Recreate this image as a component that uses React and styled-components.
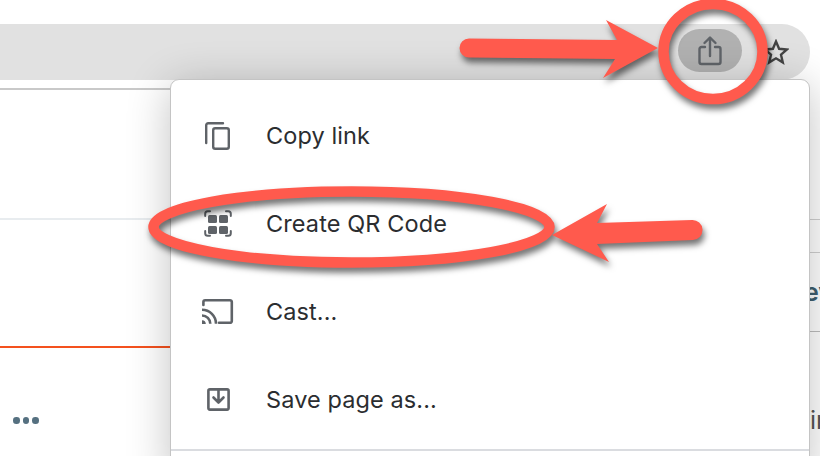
import React from "react";
import styled, { createGlobalStyle } from "styled-components";

const Global = createGlobalStyle`
  html, body { margin: 0; padding: 0; background: #fff; }
  * { box-sizing: border-box; }
`;

const Frame = styled.div`
  position: relative;
  width: 820px;
  height: 456px;
  overflow: hidden;
  background: #fff;
  font-family: Inter, "Liberation Sans", sans-serif;
  padding-top: 24px;
`;

const Toolbar = styled.div`
  height: 56px;
  width: 810px;
  background: #e1e1e1;
  border-radius: 0 28px 28px 0;
  display: flex;
  align-items: center;
  justify-content: flex-end;
  padding-right: 21px;
  gap: 21px;
`;

const SharePill = styled.div`
  width: 64px;
  height: 43px;
  border-radius: 22px;
  background: #b1b1b1;
  display: flex;
  align-items: center;
  justify-content: center;
  margin-top: -3px;
`;

const Page = styled.div`
  display: flex;
  height: 376px;
  padding-top: 8px;
`;

const MainColumn = styled.div`
  width: 810px;
  display: flex;
  flex-direction: column;
`;

const SideColumn = styled.div`
  width: 10px;
  display: flex;
  flex-direction: column;
  overflow: hidden;
`;

const Section = styled.div`
  height: ${(p) => p.$h}px;
  border-top: 2px solid ${(p) => p.$line};
  display: flex;
  align-items: ${(p) => p.$align || "stretch"};
  padding-top: ${(p) => p.$pt || 0}px;
`;

const SideRow = styled.div`
  height: ${(p) => p.$h}px;
  border-top: ${(p) => (p.$line ? `1px solid ${p.$line}` : "none")};
  white-space: nowrap;
  display: flex;
  align-items: center;
  font-size: 25px;
  font-weight: ${(p) => p.$weight || 400};
  color: ${(p) => p.$color || "#555"};
  padding-top: ${(p) => p.$pt || 0}px;
  text-indent: ${(p) => p.$shift || 0}px;
`;

const Dots = styled.div`
  display: flex;
  gap: 3px;
  margin-left: 13px;
  height: 7px;
`;

const Dot = styled.span`
  width: 6.5px;
  height: 6.5px;
  border-radius: 50%;
  background: #557080;
`;

const Menu = styled.div`
  position: absolute;
  left: 170px;
  top: 79px;
  width: 640px;
  height: 400px;
  background: #fff;
  border: 1px solid #c4c4c4;
  border-radius: 9px 9px 0 0;
  padding-top: 12px;
  box-shadow: 0 6px 44px rgba(0, 0, 0, 0.24);
`;

const MenuItem = styled.div`
  height: 88px;
  display: flex;
  align-items: center;
  padding-left: 29px;
  gap: 30px;
  font-size: 23.5px;
  color: #2b2d30;
  letter-spacing: 0.1px;
  line-height: 28px;
`;

const MenuLabel = styled.span`
  margin-top: -1px;
`;

const MenuDivider = styled.div`
  height: 2px;
  margin-top: 5px;
  background: #dadce0;
`;

const Annotations = styled.svg`
  position: absolute;
  left: 0;
  top: 0;
  width: 820px;
  height: 456px;
  pointer-events: none;
  filter: drop-shadow(2px 5px 3px rgba(0, 0, 0, 0.55));
`;

const Icon = ({ children }) => (
  <svg width="36" height="36" viewBox="0 0 36 36" fill="none" stroke="#5f6368" strokeWidth="2.4" strokeLinejoin="round" strokeLinecap="round">
    {children}
  </svg>
);

export default function App() {
  return (
    <Frame>
      <Global />
      <Toolbar>
        <SharePill>
          <svg width="28" height="32" viewBox="0 0 28 32" fill="none" stroke="#5f6368" strokeWidth="2.4" strokeLinecap="round" strokeLinejoin="round">
            <path d="M9 12H5.500a2 2 0 0 0-2 2v13a2 2 0 0 0 2 2h17a2 2 0 0 0 2-2V14a2 2 0 0 0-2-2H19" />
            <path d="M14 21V3M8.500 8 14 2.500 19.500 8" />
          </svg>
        </SharePill>
        <svg width="26" height="26" viewBox="0 0 26 26" fill="none" stroke="#444" strokeWidth="2.4" strokeLinejoin="miter">
          <path d="M13 2.500l3.100 7.300 7.900.7-6 5.200 1.800 7.700-6.800-4.100-6.800 4.100 1.800-7.700-6-5.200 7.900-.7z" />
        </svg>
      </Toolbar>
      <Page>
        <MainColumn>
          <Section $h={130} $line="#c9c9c9" />
          <Section $h={128} $line="#e8ecef" />
          <Section $h={110} $line="#f4511e" $pt={69}>
            <Dots>
              <Dot />
              <Dot />
              <Dot />
            </Dots>
          </Section>
        </MainColumn>
        <SideColumn>
          <SideRow $h={131} />
          <SideRow $h={33} $line="#d0d0d0" />
          <SideRow $h={79} $line="#d0d0d0" $weight={600} $color="#3f5f6f" $shift={-6}>
            ev
          </SideRow>
          <SideRow $h={120} $line="#bdbdbd" $pt={56}>
            ir
          </SideRow>
        </SideColumn>
      </Page>
      <Menu>
        <MenuItem>
          <Icon>
            <rect x="13.200" y="10.200" width="15.600" height="20.600" rx="2" />
            <path d="M6.200 25V7.200a2 2 0 0 1 2-2H23" />
          </Icon>
          <MenuLabel>Copy link</MenuLabel>
        </MenuItem>
        <MenuItem>
          <Icon>
            <path d="M5.200 10V7.700A2.500 2.500 0 0 1 7.700 5.200H10M26 5.200h2.300a2.500 2.500 0 0 1 2.500 2.500V10M30.800 25v2.300a2.500 2.500 0 0 1-2.500 2.500H26M10 29.800H7.700a2.500 2.500 0 0 1-2.500-2.500V25" strokeWidth="2" />
            <g fill="#5f6368" stroke="none">
              <rect x="8" y="9" width="9" height="8" rx="1.500" />
              <rect x="19" y="9" width="9" height="8" rx="1.500" />
              <rect x="8" y="20" width="9" height="8" rx="1.500" />
              <rect x="19" y="20" width="9" height="8" rx="1.500" />
            </g>
          </Icon>
          <MenuLabel>Create QR Code</MenuLabel>
        </MenuItem>
        <MenuItem>
          <Icon>
            <path d="M3.400 11V8a1.800 1.800 0 0 1 1.800-1.800H30a1.800 1.800 0 0 1 1.800 1.800v19a1.800 1.800 0 0 1-1.800 1.800H19" strokeWidth="2.600" />
            <path d="M2 15.800a14 14 0 0 1 14 14M2 21.500a8.300 8.300 0 0 1 8.300 8.300" strokeLinecap="butt" strokeWidth="2.600" />
            <path d="M2 26.200a3.800 3.800 0 0 1 3.800 3.800H2z" fill="#5f6368" stroke="none" />
          </Icon>
          <MenuLabel>Cast...</MenuLabel>
        </MenuItem>
        <MenuItem>
          <Icon>
            <rect x="8.400" y="7.400" width="20.200" height="20.200" rx="1.500" strokeWidth="2.600" />
            <path d="M18.500 7.400V20M13.500 15.500 18.500 20.500l5-5" strokeWidth="2.600" />
          </Icon>
          <MenuLabel>Save page as...</MenuLabel>
        </MenuItem>
        <MenuDivider />
      </Menu>
      <Annotations viewBox="0 0 820 456" fill="none">
        <ellipse cx="713" cy="51.500" rx="49.500" ry="47.500" stroke="#ff5a4d" strokeWidth="10.500" />
        <ellipse cx="351.500" cy="227" rx="198" ry="35.500" stroke="#ff5a4d" strokeWidth="10.500" />
        <path fill="#ff5a4d" d="M469 38.500 L617 40 L606 20 L658 48 L603 78 L615 59 L469 57.500 A9.500 9.500 0 0 1 469 38.500Z" />
        <path fill="#ff5a4d" d="M552 235 L607 204 L597 223 L692 220 A10 10 0 0 1 693 240 L597 244 L609 262 Z" />
      </Annotations>
    </Frame>
  );
}
